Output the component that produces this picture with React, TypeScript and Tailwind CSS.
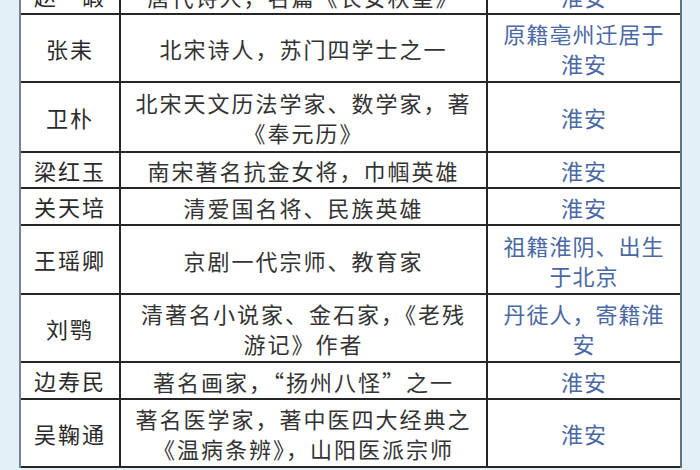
import React from 'react';

type Row = {
  name: string;
  desc: React.ReactNode;
  place: React.ReactNode;
  h: string;
};

const rows: Row[] = [
  { name: '赵　嘏', desc: '唐代诗人，名篇《长安秋望》', place: '淮安', h: 'h-[37px]' },
  { name: '张耒', desc: '北宋诗人，苏门四学士之一', place: <>原籍亳州迁居于<br />淮安</>, h: 'h-[68px]' },
  { name: '卫朴', desc: <>北宋天文历法学家、数学家，著<br />《奉元历》</>, place: '淮安', h: 'h-[70px]' },
  { name: '梁红玉', desc: '南宋著名抗金女将，巾帼英雄', place: '淮安', h: 'h-[36px]' },
  { name: '关天培', desc: '清爱国名将、民族英雄', place: '淮安', h: 'h-[37px]' },
  { name: '王瑶卿', desc: '京剧一代宗师、教育家', place: <>祖籍淮阴、出生<br />于北京</>, h: 'h-[69px]' },
  { name: '刘鹗', desc: <>清著名小说家、金石家，《老残<br />游记》作者</>, place: <>丹徒人，寄籍淮<br />安</>, h: 'h-[68px]' },
  { name: '边寿民', desc: '著名画家，“扬州八怪”之一', place: '淮安', h: 'h-[37px]' },
  { name: '吴鞠通', desc: <>著名医学家，著中医四大经典之<br />《温病条辨》，山阳医派宗师</>, place: '淮安', h: 'h-[68px]' },
];

const App = () => {
  return (
    <div
      className="w-[700px] h-[470px] overflow-hidden bg-[#e4f0f8] pl-[19px]"
      style={{ fontFamily: '"Noto Sans CJK SC", "Noto Sans", sans-serif' }}
    >
      <div className="-mt-[22px] w-[663px] border-l-2 border-r-2 border-l-[#6f8494] border-r-[#5d7182] bg-white">
        {rows.map((r, i) => (
          <div
            key={i}
            className={`grid grid-cols-[100px_367px_192px] border-b-2 border-[#262626] ${r.h}`}
          >
            <div className="flex items-center justify-center border-r-2 border-[#262626] text-[22px] tracking-[2px] text-[#2a2a2a] whitespace-nowrap">
              {r.name}
            </div>
            <div className="flex items-center justify-center border-r-2 border-[#262626] text-center text-[22px] leading-[30px] tracking-[2px] text-[#333333] whitespace-nowrap">
              <div>{r.desc}</div>
            </div>
            <div className="flex items-center justify-center text-center text-[22px] leading-[30px] tracking-[1px] text-[#4a68a3] whitespace-nowrap">
              <div>{r.place}</div>
            </div>
          </div>
        ))}
      </div>
    </div>
  );
};

export default App;
